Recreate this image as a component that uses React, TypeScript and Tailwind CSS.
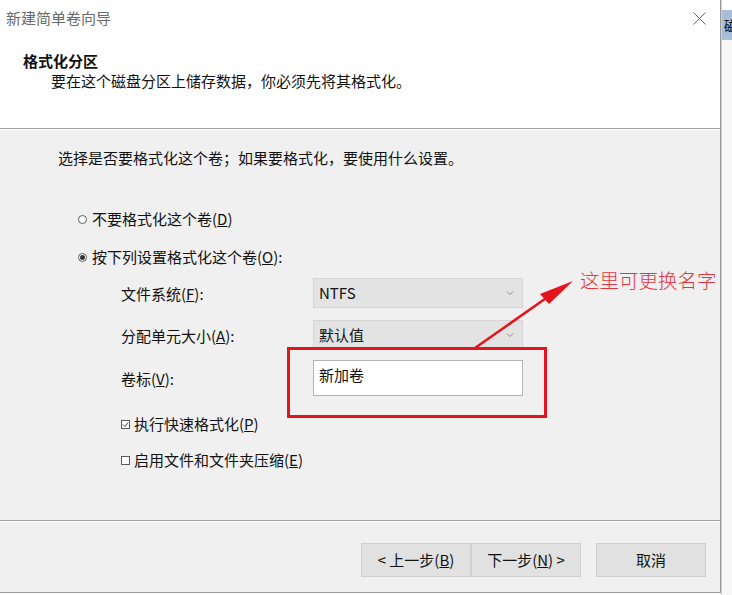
import React from "react";

const font = { fontFamily: '"Noto Sans CJK SC", "Noto Sans", sans-serif' };

function Chevron() {
  return (
    <svg width="8" height="5" viewBox="0 0 8 5" className="absolute right-[8px] top-1/2 -translate-y-1/2">
      <path d="M1 1 L4 4 L7 1" fill="none" stroke="#8a8a8a" strokeWidth="1" />
    </svg>
  );
}

function Radio({ checked }: { checked?: boolean }) {
  return (
    <span className="relative inline-flex w-[9px] h-[9px] rounded-full border border-[#5a5a5a] bg-white items-center justify-center mr-[5px]">
      {checked && <span className="w-[5px] h-[5px] rounded-full bg-[#333]" />}
    </span>
  );
}

function Check({ checked }: { checked?: boolean }) {
  return (
    <span className="relative inline-flex w-[9px] h-[9px] border border-[#5a5a5a] bg-white items-center justify-center mr-[4px]">
      {checked && (
        <svg width="7" height="7" viewBox="0 0 7 7">
          <path d="M1 3.5 L3 5.5 L6 1.5" fill="none" stroke="#444" strokeWidth="1" />
        </svg>
      )}
    </span>
  );
}

export default function App() {
  return (
    <div className="w-[732px] h-[595px] flex bg-white overflow-hidden relative text-[15px] text-[#111]" style={font}>
      <div className="w-[721px] shrink-0 h-[593px] flex flex-col border-r border-b border-[#9a9a9a]">
        {/* header */}
        <div className="h-[128px] bg-white flex flex-col">
          <div className="h-[36px] flex items-center justify-between pl-[6px] pr-[14px]">
            <span className="text-[#6a6a6a] text-[15px] leading-[20px]">新建简单卷向导</span>
            <svg width="13" height="13" viewBox="0 0 13 13">
              <path d="M0.5 0.5 L12.5 12.5 M12.5 0.5 L0.5 12.5" stroke="#666" strokeWidth="1" />
            </svg>
          </div>
          <div className="pl-[23px] mt-[15px] font-bold leading-[20px]">格式化分区</div>
          <div className="pl-[51px] leading-[20px]">要在这个磁盘分区上储存数据，你必须先将其格式化。</div>
        </div>
        <div className="h-[1px] bg-[#a0a0a0]" />
        <div className="h-[1px] bg-white" />
        {/* body */}
        <div className="h-[390px] bg-[#f0f0f0] flex flex-col">
          <div className="pl-[58px] mt-[18px] leading-[20px]">选择是否要格式化这个卷；如果要格式化，要使用什么设置。</div>
          <div className="pl-[78px] mt-[41px] leading-[20px] flex items-center">
            <Radio />
            <span>不要格式化这个卷(<u>D</u>)</span>
          </div>
          <div className="pl-[78px] mt-[18px] leading-[20px] flex items-center">
            <Radio checked />
            <span>按下列设置格式化这个卷(<u>O</u>):</span>
          </div>
          <div className="pl-[121px] mt-[11px] flex items-center h-[30px]">
            <span className="w-[192px] pt-[2px]">文件系统(<u>F</u>):</span>
            <div className="relative w-[210px] h-[30px] bg-[#e3e3e3] border border-[#d5d5d5] flex items-center pl-[5px]">
              NTFS
              <Chevron />
            </div>
          </div>
          <div className="pl-[121px] mt-[12px] flex items-center h-[30px]">
            <span className="w-[192px] pt-[2px]">分配单元大小(<u>A</u>):</span>
            <div className="relative w-[210px] h-[30px] bg-[#e3e3e3] border border-[#d5d5d5] flex items-center pl-[5px]">
              默认值
              <Chevron />
            </div>
          </div>
          <div className="pl-[121px] mt-[10px] flex items-center h-[36px]">
            <span className="w-[192px] pt-[2px]">卷标(<u>V</u>):</span>
            <div className="w-[210px] h-[36px] bg-white border border-[#b4b4b4] flex items-start pl-[5px] pt-[4px] leading-[20px]">
              新加卷
            </div>
          </div>
          <div className="pl-[121px] mt-[18px] leading-[20px] flex items-center">
            <Check checked />
            <span>执行快速格式化(<u>P</u>)</span>
          </div>
          <div className="pl-[121px] mt-[16px] leading-[20px] flex items-center">
            <Check />
            <span>启用文件和文件夹压缩(<u>E</u>)</span>
          </div>
        </div>
        <div className="h-[1px] bg-[#a0a0a0]" />
        <div className="h-[1px] bg-white" />
        {/* footer */}
        <div className="flex-1 bg-[#f0f0f0] flex items-start pt-[21px] pl-[361px]">
          <button className="w-[110px] h-[34px] bg-[#e1e1e1] border border-[#cfcfcf] text-[15px]">&lt; 上一步(<u>B</u>)</button>
          <button className="w-[110px] h-[34px] bg-[#e1e1e1] border border-[#cfcfcf] text-[15px]">下一步(<u>N</u>) &gt;</button>
          <button className="ml-[15px] w-[110px] h-[34px] bg-[#e1e1e1] border border-[#cfcfcf] text-[15px]">取消</button>
        </div>
      </div>
      {/* background window strip */}
      <div className="flex-1 min-w-0 overflow-hidden flex flex-col bg-[#f4f4f4] border-l border-[#d0d0d0]">
        <div className="h-[10px] bg-white" />
        <div className="h-[30px] bg-[#a9bdd6] overflow-hidden pl-[2px] flex items-center text-[14px] text-black whitespace-nowrap">磁</div>
        <div className="flex-1 bg-[#f7f7f7]" />
      </div>
      {/* annotation */}
      <svg className="absolute left-0 top-0 pointer-events-none" width="732" height="595" viewBox="0 0 732 595">
        <rect x="288.5" y="348.5" width="257" height="68" fill="none" stroke="#e3141c" strokeWidth="3" />
        <line x1="475" y1="348" x2="552" y2="294" stroke="#e3141c" strokeWidth="2.5" />
        <polygon points="573,281 540,294 549,304" fill="#e3141c" />
      </svg>
      <div className="absolute left-[580px] top-[268px] text-[19.5px] leading-[24px] text-[#e5333f] whitespace-nowrap" style={{ fontFamily: '"Noto Sans CJK SC", sans-serif', fontWeight: 300 }}>
        这里可更换名字
      </div>
    </div>
  );
}
